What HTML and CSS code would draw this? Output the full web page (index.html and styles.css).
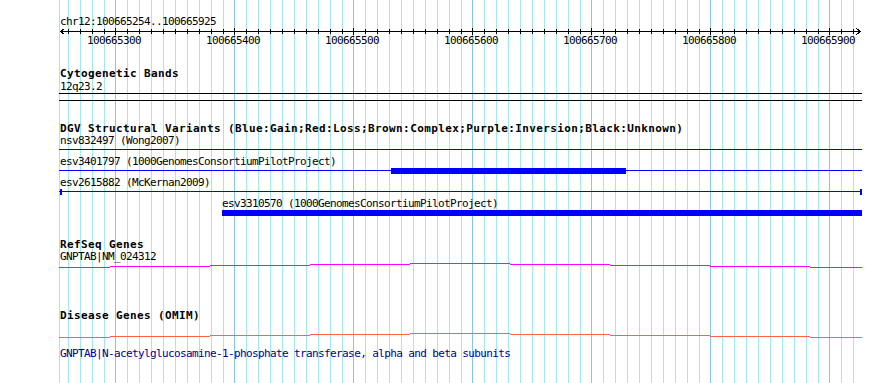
FILE: index.html
```html
<!DOCTYPE html>
<html>
<head>
<meta charset="utf-8">
<title>GBrowse view chr12:100665254..100665925</title>
<link rel="stylesheet" href="styles.css">
</head>
<body>
<div class="view">
  <svg class="grid" width="890" height="383" viewBox="0 0 890 383">
    <path class="grid-minor" d="M59.5 0V383M68.5 0V383M80.5 0V383M92.5 0V383M104.5 0V383M127.5 0V383M139.5 0V383M151.5 0V383M163.5 0V383M175.5 0V383M187.5 0V383M199.5 0V383M211.5 0V383M223.5 0V383M246.5 0V383M258.5 0V383M270.5 0V383M282.5 0V383M294.5 0V383M306.5 0V383M318.5 0V383M330.5 0V383M342.5 0V383M365.5 0V383M377.5 0V383M389.5 0V383M401.5 0V383M413.5 0V383M425.5 0V383M437.5 0V383M449.5 0V383M461.5 0V383M484.5 0V383M496.5 0V383M508.5 0V383M520.5 0V383M532.5 0V383M544.5 0V383M556.5 0V383M568.5 0V383M580.5 0V383M603.5 0V383M615.5 0V383M627.5 0V383M639.5 0V383M651.5 0V383M663.5 0V383M675.5 0V383M687.5 0V383M699.5 0V383M722.5 0V383M734.5 0V383M746.5 0V383M758.5 0V383M770.5 0V383M782.5 0V383M794.5 0V383M806.5 0V383M818.5 0V383M841.5 0V383M853.5 0V383"/>
    <path class="grid-major" d="M115.5 0V383M234.5 0V383M353.5 0V383M472.5 0V383M591.5 0V383M710.5 0V383M829.5 0V383"/>
  </svg>

  <section class="track ruler">
    <div class="text">chr12:100665254..100665925</div>
    <svg class="scale" width="803" height="8" viewBox="0 0 803 8">
      <path class="scale-line" d="M1 3.5H802"/>
      <polyline class="scale-line" points="5.5,0.5 1.5,3.5 5.5,6.5"/>
      <polyline class="scale-line" points="797.5,0.5 801.5,3.5 797.5,6.5"/>
      <path class="scale-line" d="M9.5 1v5M21.5 1v5M33.5 1v5M45.5 1v5M68.5 1v5M80.5 1v5M92.5 1v5M104.5 1v5M116.5 1v5M128.5 1v5M140.5 1v5M152.5 1v5M164.5 1v5M187.5 1v5M199.5 1v5M211.5 1v5M223.5 1v5M235.5 1v5M247.5 1v5M259.5 1v5M271.5 1v5M283.5 1v5M306.5 1v5M318.5 1v5M330.5 1v5M342.5 1v5M354.5 1v5M366.5 1v5M378.5 1v5M390.5 1v5M402.5 1v5M425.5 1v5M437.5 1v5M449.5 1v5M461.5 1v5M473.5 1v5M485.5 1v5M497.5 1v5M509.5 1v5M521.5 1v5M544.5 1v5M556.5 1v5M568.5 1v5M580.5 1v5M592.5 1v5M604.5 1v5M616.5 1v5M628.5 1v5M640.5 1v5M663.5 1v5M675.5 1v5M687.5 1v5M699.5 1v5M711.5 1v5M723.5 1v5M735.5 1v5M747.5 1v5M759.5 1v5M782.5 1v5M794.5 1v5"/>
      <path class="scale-line" d="M56.5 0v7M175.5 0v7M294.5 0v7M413.5 0v7M532.5 0v7M651.5 0v7M770.5 0v7"/>
    </svg>
    <div class="ticks">
      <span class="tick" style="left:28px">100665300</span>
      <span class="tick" style="left:147px">100665400</span>
      <span class="tick" style="left:266px">100665500</span>
      <span class="tick" style="left:385px">100665600</span>
      <span class="tick" style="left:504px">100665700</span>
      <span class="tick" style="left:623px">100665800</span>
      <span class="tick" style="left:742px">100665900</span>
    </div>
  </section>

  <section class="track cyto">
    <h2 class="title">Cytogenetic Bands</h2>
    <div class="text text-gap">12q23.2</div>
    <div class="band"></div>
  </section>

  <section class="track dgv">
    <h2 class="title">DGV Structural Variants (Blue:Gain;Red:Loss;Brown:Complex;Purple:Inversion;Black:Unknown)</h2>
    <div class="feature">
      <div class="text">nsv832497 (Wong2007)</div>
      <div class="glyph"><div class="line"></div></div>
    </div>
    <div class="feature">
      <div class="text">esv3401797 (1000GenomesConsortiumPilotProject)</div>
      <div class="glyph"><div class="line"></div><div class="bar" style="left:332px;width:235px"></div></div>
    </div>
    <div class="feature">
      <div class="text">esv2615882 (McKernan2009)</div>
      <div class="glyph"><div class="line"></div><div class="bar" style="left:1px;width:2px"></div><div class="bar" style="left:801px;width:2px"></div></div>
    </div>
    <div class="feature">
      <div class="text" style="padding-left:163px">esv3310570 (1000GenomesConsortiumPilotProject)</div>
      <div class="glyph"><div class="bar" style="left:163px;width:640px"></div></div>
    </div>
  </section>

  <section class="track refseq">
    <h2 class="title">RefSeq Genes</h2>
    <div class="text">GNPTAB|NM_024312</div>
    <svg class="hat hat-refseq" width="803" height="5" viewBox="0 0 803 5">
      <rect x="0" y="4" width="51" height="1"/>
      <rect x="51" y="3" width="100" height="1"/>
      <rect x="151" y="2" width="100" height="1"/>
      <rect x="251" y="1" width="100" height="1"/>
      <rect x="351" y="0" width="100" height="1"/>
      <rect x="451" y="1" width="100" height="1"/>
      <rect x="551" y="2" width="100" height="1"/>
      <rect x="651" y="3" width="100" height="1"/>
      <rect x="751" y="4" width="52" height="1"/>
    </svg>
  </section>

  <section class="track omim">
    <h2 class="title">Disease Genes (OMIM)</h2>
    <svg class="hat hat-omim" width="803" height="5" viewBox="0 0 803 5">
      <rect x="0" y="4" width="51" height="1"/>
      <rect x="51" y="3" width="100" height="1"/>
      <rect x="151" y="2" width="100" height="1"/>
      <rect x="251" y="1" width="100" height="1"/>
      <rect x="351" y="0" width="100" height="1"/>
      <rect x="451" y="1" width="100" height="1"/>
      <rect x="551" y="2" width="100" height="1"/>
      <rect x="651" y="3" width="100" height="1"/>
      <rect x="751" y="4" width="52" height="1"/>
    </svg>
    <div class="text desc">GNPTAB|N-acetylglucosamine-1-phosphate transferase, alpha and beta subunits</div>
  </section>
</div>
</body>
</html>
```

FILE: styles.css
```css
html, body {
  margin: 0;
  padding: 0;
  background: #ffffff;
}

body {
  font-family: "DejaVu Sans Mono", "Liberation Mono", monospace;
  font-size: 11px;
  line-height: 13px;
  letter-spacing: -0.62px;
  color: #000000;
}

.view {
  position: relative;
  width: 890px;
  height: 383px;
  overflow: hidden;
}

.grid {
  position: absolute;
  left: 0;
  top: 0;
  display: block;
}

.grid-minor {
  stroke: #a8e6ee;
  stroke-width: 1;
  fill: none;
}

.grid-major {
  stroke: #88c6e6;
  stroke-width: 1;
  fill: none;
}

.track {
  position: relative;
  margin-left: 59px;
  width: 803px;
}

.text {
  height: 13px;
  padding-left: 1px;
  white-space: nowrap;
}

.text-gap {
  margin-top: 1px;
}

.title {
  margin: 0;
  height: 12px;
  padding-left: 1px;
  font-size: 11px;
  font-weight: bold;
  letter-spacing: 0.38px;
  line-height: 13px;
  white-space: nowrap;
}

/* ruler */
.ruler {
  padding-top: 15px;
}

.scale {
  display: block;
}

.scale-line {
  stroke: #000000;
  stroke-width: 1;
  fill: none;
  shape-rendering: crispEdges;
}

.ticks {
  position: relative;
  height: 13px;
  margin-top: -2px;
}

.tick {
  position: absolute;
  top: 0;
  white-space: nowrap;
}

/* cytogenetic bands */
.cyto {
  margin-top: 20px;
}

.band {
  height: 6px;
  border-top: 1px solid #000000;
  border-bottom: 1px solid #000000;
}

/* DGV */
.dgv {
  margin-top: 21px;
}

.feature {
  padding-bottom: 2px;
}

.glyph {
  position: relative;
  height: 6px;
}

.glyph .line {
  position: absolute;
  left: 0;
  right: 0;
  top: 2px;
  height: 1px;
  background: #0000ff;
}

.glyph .bar {
  position: absolute;
  top: 0;
  height: 6px;
  background: #0000ff;
}

/* RefSeq */
.refseq {
  margin-top: 20px;
}

.hat {
  display: block;
  shape-rendering: crispEdges;
}

.hat-refseq rect {
  fill: #ff00ff;
}

/* OMIM */
.omim {
  margin-top: 41px;
}

.hat-omim {
  margin-top: 12px;
}

.hat-omim rect {
  fill: #ff6347;
}

.desc {
  margin-top: 9px;
  color: #00008b;
}
```
